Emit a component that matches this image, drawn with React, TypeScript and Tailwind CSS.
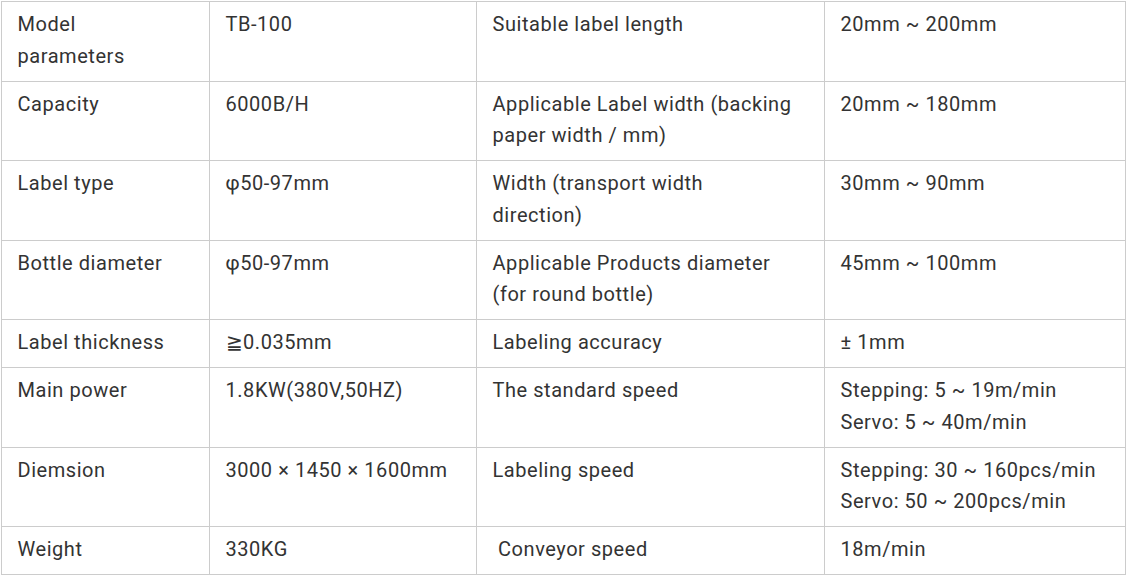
import React from "react";

const rows: string[][][] = [
  [["Model", "parameters"], ["TB-100"], ["Suitable label length"], ["20mm ~ 200mm"]],
  [["Capacity"], ["6000B/H"], ["Applicable Label width (backing", "paper width / mm)"], ["20mm ~ 180mm"]],
  [["Label type"], ["φ50-97mm"], ["Width (transport width", "direction)"], ["30mm ~ 90mm"]],
  [["Bottle diameter"], ["φ50-97mm"], ["Applicable Products diameter", "(for round bottle)"], ["45mm ~ 100mm"]],
  [["Label thickness"], ["≧0.035mm"], ["Labeling accuracy"], ["± 1mm"]],
  [["Main power"], ["1.8KW(380V,50HZ)"], ["The standard speed"], ["Stepping: 5 ~ 19m/min", "Servo: 5 ~ 40m/min"]],
  [["Diemsion"], ["3000 × 1450 × 1600mm"], ["Labeling speed"], ["Stepping: 30 ~ 160pcs/min", "Servo: 50 ~ 200pcs/min"]],
  [["Weight"], ["330KG"], ["\u00a0Conveyor speed"], ["18m/min"]],
];

export default function App() {
  return (
    <div className="w-[1127px] h-[576px] bg-white overflow-hidden">
      <div
        className="ml-px mt-px w-[1125px] grid grid-cols-[207px_266px_347px_300px] gap-px p-px bg-[#cccccc] text-[20px] tracking-[0.55px] leading-[31.5px] text-[#333333]"
        style={{ fontFamily: "Roboto, 'Noto Sans', sans-serif" }}
      >
        {rows.map((r, i) =>
          r.map((cell, j) => (
            <div key={`${i}-${j}`} className="bg-white pl-[15.5px] pr-4 pt-[7px] pb-[8.5px] whitespace-pre">
              {cell.map((line, k) => (
                <div key={k}>{line}</div>
              ))}
            </div>
          ))
        )}
      </div>
    </div>
  );
}
